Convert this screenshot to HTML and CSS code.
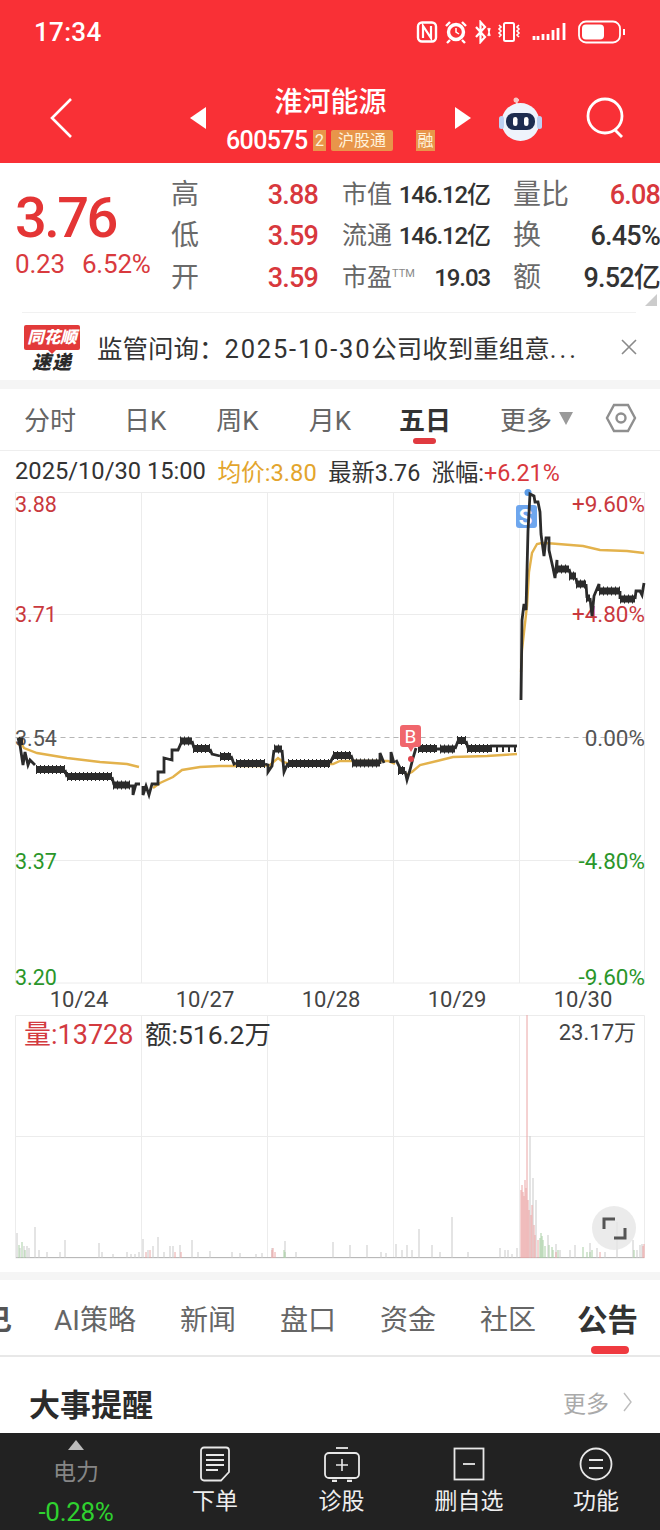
FILE: index.html
```html
<!DOCTYPE html>
<html lang="zh-CN">
<head>
<meta charset="utf-8">
<title>淮河能源</title>
<link rel="stylesheet" href="styles.css">
</head>
<body>
<div class="page">
  <header class="head">
    <div class="status">
      <span class="clock">17:34</span>
      <svg class="status-icons" width="210" height="24" viewBox="0 0 210 24" fill="none" stroke="#fff" stroke-width="2">
        <rect x="2" y="2.500" width="18" height="19" rx="4" stroke-width="2.400"/>
        <path d="M7 18V6l8 12V6" stroke-width="2.200"/>
        <circle cx="40" cy="12" r="7.500" stroke-width="3.400"/>
        <path d="M40 8v4l3 2" stroke-width="1.500"/>
        <path d="M30 6l4-4M50 6l-4-4M34 20l-3 3M46 20l3 3" stroke-width="2.400"/>
        <path d="M60 7l9 10-4.500 5V2L69 7l-9 10" stroke-width="2.200"/>
        <path d="M72 8l2 8M72 16l2-8" stroke-width="1.400"/>
        <rect x="88" y="3" width="10" height="18" rx="1.500" stroke-width="2"/>
        <path d="M83 5l2 2-2 2 2 2-2 2 2 2-2 2M103 5l-2 2 2 2-2 2 2 2-2 2 2 2" stroke-width="1.600"/>
        <path d="M118 16v4M122 16v4M127 14v6M132 14v6M137 10v10M142 8v12M148 3v17" stroke-width="2.800"/>
        <rect x="163" y="1.500" width="41" height="21" rx="7" stroke-width="1.800"/>
        <rect x="166" y="4.500" width="22" height="15" rx="4" fill="#fff" stroke="none"/>
        <path d="M208 9v6" stroke-width="2"/>
      </svg>
    </div>
    <div class="nav">
      <svg class="back" width="24" height="42" viewBox="0 0 24 42" fill="none" stroke="#fff" stroke-width="2.600"><path d="M22 2L3 21l19 19"/></svg>
      <svg class="tri-left" width="16" height="22" viewBox="0 0 16 22"><path d="M16 0v22L0 11z" fill="#fff"/></svg>
      <div class="stock">
        <div class="stock-name">淮河能源</div>
        <div class="stock-code">
          <span class="code">600575</span>
          <span class="tag tag-num">2</span>
          <span class="tag tag-hgt">沪股通</span>
          <span class="tag tag-rong">融</span>
        </div>
      </div>
      <svg class="tri-right" width="16" height="22" viewBox="0 0 16 22"><path d="M0 0v22l16-11z" fill="#fff"/></svg>
      <svg class="robot" width="46" height="44" viewBox="0 0 46 44">
        <path d="M19 7c-1-3 0-4 2-4" fill="none" stroke="#f7c7c7" stroke-width="2"/>
        <circle cx="18" cy="3" r="2.500" fill="#f7c7c7"/>
        <circle cx="22.500" cy="25" r="19" fill="#eef3fc"/>
        <rect x="1" y="19" width="5" height="13" rx="2.500" fill="#bcd0f2"/>
        <rect x="39" y="19" width="5" height="13" rx="2.500" fill="#bcd0f2"/>
        <rect x="8" y="16" width="29" height="17" rx="8" fill="#1d2c50"/>
        <rect x="15" y="20" width="4.500" height="9" rx="2.200" fill="#fff"/>
        <rect x="26" y="20" width="4.500" height="9" rx="2.200" fill="#fff"/>
      </svg>
      <svg class="search" width="40" height="42" viewBox="0 0 40 42" fill="none" stroke="#fff" stroke-width="2.800"><circle cx="19" cy="19" r="17"/><path d="M29 33l7 7"/></svg>
    </div>
  </header>

  <section class="quote">
    <div class="price">
      <div class="price-main">3.76</div>
      <div class="price-sub"><span>0.23</span><span>6.52%</span></div>
    </div>
    <div class="q-grid">
      <span class="q-label">高</span><span class="q-val red">3.88</span>
      <span class="q-name">市值</span><span class="q-num">146.12亿</span>
      <span class="q-label q-label-r">量比</span><span class="q-val red">6.08</span>

      <span class="q-label">低</span><span class="q-val red">3.59</span>
      <span class="q-name">流通</span><span class="q-num">146.12亿</span>
      <span class="q-label q-label-r">换</span><span class="q-val">6.45%</span>

      <span class="q-label">开</span><span class="q-val red">3.59</span>
      <span class="q-name">市盈<sup class="ttm">TTM</sup></span><span class="q-num">19.03</span>
      <span class="q-label q-label-r">额</span><span class="q-val">9.52亿</span>
    </div>
    <span class="corner"></span>
  </section>

  <section class="news">
    <div class="logo">
      <span class="logo-top">同花顺</span>
      <span class="logo-bottom">速递</span>
    </div>
    <div class="news-text">监管问询：<span class="news-num">2025-10-30</span>公司收到重组意<span class="news-dots">...</span></div>
    <svg class="close" width="16" height="16" viewBox="0 0 16 16" stroke="#8a8a8a" stroke-width="1.600"><path d="M1 1l14 14M15 1L1 15"/></svg>
  </section>
  <div class="gap"></div>

  <nav class="periods">
    <span class="period p1">分时</span>
    <span class="period p2">日K</span>
    <span class="period p3">周K</span>
    <span class="period p4">月K</span>
    <span class="period period-on p5">五日</span>
    <span class="period p6">更多</span>
    <span class="more-tri"></span>
    <svg class="hex" width="32" height="30" viewBox="0 0 32 30" fill="none" stroke="#8f8f8f" stroke-width="2.400"><path d="M9 2h14l7 13-7 13H9L2 15z"/><circle cx="16" cy="15" r="4.500"/></svg>
  </nav>

  <div class="info">
    <span class="dark">2025/10/30 15:00</span>
    <span class="gold">均价:3.80</span>
    <span class="dark info-tight">最新3.76</span>
    <span class="dark info-tight">涨幅:<span class="red">+6.21%</span></span>
  </div>

  <svg class="price-chart" width="660" height="495" viewBox="0 490 660 495">
    <defs>
      <g id="bands">
        <path d="M19 741.500H23"/>
        <path d="M36 769.500H65"/>
        <path d="M67 776.500H112"/>
        <path d="M113 785H130"/>
        <path d="M180 741H192"/>
        <path d="M193 748.500H210"/>
        <path d="M220 756.500H231"/>
        <path d="M236 763.500H265"/>
        <path d="M274 749H282"/>
        <path d="M288 763.500H330"/>
        <path d="M333 755.500H351"/>
        <path d="M352 763H380"/>
        <path d="M398 770.500H405"/>
        <path d="M418 748.500H437"/>
        <path d="M440 749H455"/>
        <path d="M457 740.500H466"/>
        <path d="M467 748.500H490"/>
        <path d="M557 569H569"/>
        <path d="M569 576H576"/>
        <path d="M576 584H586"/>
        <path d="M586 598H590"/>
        <path d="M599 591H620"/>
        <path d="M620 599H635"/>
      </g>
    </defs>
    <g stroke="#ececec" stroke-width="1" fill="none">
      <path d="M15.500 492.500H644.500V983H15.500Z"/>
      <path d="M141.500 492V983M267.500 492V983M393.500 492V983M519.500 492V983"/>
      <path d="M15.500 614.500H644.500M15.500 860.500H644.500"/>
    </g>
    <path d="M15.500 737.500H644.500" stroke="#b5b5b5" stroke-width="1" stroke-dasharray="5 4" fill="none"/>

    <g class="axis">
      <text class="ax-red" x="15" y="504">3.88</text>
      <text class="ax-red" x="15" y="614">3.71</text>
      <text class="ax-gray" x="15" y="738">3.54</text>
      <text class="ax-green" x="15" y="861">3.37</text>
      <text class="ax-green" x="15" y="977">3.20</text>
    </g>
    <g class="axis axis-right">
      <text class="ax-red" x="645" y="504">+9.60%</text>
      <text class="ax-red" x="645" y="614">+4.80%</text>
      <text class="ax-gray" x="645" y="738">0.00%</text>
      <text class="ax-green" x="645" y="861">-4.80%</text>
      <text class="ax-green" x="645" y="977">-9.60%</text>
    </g>

    <g class="gold-line">
      <path d="M18 738L24 748L37 753L67 758L100 762L127 764L139 767"/>
      <path d="M153 788L160 783L173 777L182 770L200 767L220 766L262 766L270 765L278 758L283 762L290 764L333 764L340 761L388 761L395 764"/>
      <path d="M405 775L412 772L420 765L437 761L453 757L487 756L517 754"/>
      <path d="M521 672L522 650L527 606L529 572L532 553L537 544L542 543L552 543.500L583 546L600 550L627 551L644 553"/>
    </g>

    <rect x="516" y="505" width="21" height="23" rx="3" fill="#6ea6ee"/>
    <circle cx="528" cy="492.500" r="3.500" fill="#5b9be6"/>
    <text class="mark mark-s" x="525.500" y="517">S</text>

    <g class="line-thin">
      <path d="M18 738L20 745L23 765L25 752L28 765L30 760L35 765M65 770L67 777M112 777L114 785M130 786H133V795L136 784H140M143 786V795L146 786L149 795L152 784L158 784V772L164 772V758L172 760V750L178 750L182 741M192 741L194 748M210 749L212 754L220 756M231 756L234 764L236 763M265 764L268 765V772L272 766L274 750M282 750L284 772L288 763M330 763L334 755M351 755L354 764M380 764V753L384 763M391 763V752L394 763M396 760L400 768M405 771L407 780L410 770L413 758L416 748M437 749L440 749M455 749L458 741M466 741L468 748"/>
      <path d="M521 700L522 620L524 604L526 610L528 531L530 494L534 496L535 502L538 502L540 512L541 534L544 556L546 538L549 538V550L553 568L555 578L557 560V569M569 569L571 576M576 578L577 584M586 584L587 598M590 598L592 616L594 596L599 584V591M620 591V599M635 599L636 591L640 591L642 595L644 583"/>
    </g>
    <use href="#bands" class="band-solid"/>
    <use href="#bands" class="band-bump"/>
    <path class="line-thin" d="M490 746H517"/>
    <path class="line-comb" d="M490 749H517"/>

    <path d="M403 725h15a3 3 0 0 1 3 3v16a3 3 0 0 1-3 3h-4l-3 5-3-5h-5a3 3 0 0 1-3-3v-16a3 3 0 0 1 3-3z" fill="#f0666c"/>
    <circle cx="411" cy="759" r="3" fill="#e0444c"/>
    <text class="mark" x="410.500" y="736">B</text>
  </svg>

  <div class="dates">
    <span>10/24</span><span>10/27</span><span>10/28</span><span>10/29</span><span>10/30</span>
  </div>

  <svg class="vol-chart" width="660" height="245" viewBox="0 1015 660 245">
    <g stroke="#ececec" stroke-width="1" fill="none">
      <path d="M15.500 1015.500H644.500V1258H15.500Z"/>
      <path d="M141.500 1015V1258M267.500 1015V1258M393.500 1015V1258M519.500 1015V1258"/>
      <path d="M15.500 1136.500H644.500"/>
    </g>
    <path d="M16 1257.500H644" stroke="#b9b9b9" stroke-width="1"/>
    <path class="bar-gray" d="M17 1258V1233M20 1258V1248M24 1258V1246M27 1258V1246M29 1258V1248M35 1258V1227M39 1258V1250M47 1258V1252M65 1258V1240M60 1258V1252M99 1258V1243M102 1258V1252M113 1258V1254M127 1258V1252M131 1258V1254M135 1258V1254M139 1258V1252M143 1258V1239M148 1258V1250M153 1258V1246M158 1258V1237M164 1258V1252M170 1258V1246M173 1258V1246M180 1258V1245M192 1258V1240M198 1258V1252M210 1258V1251M232 1258V1252M240 1258V1253M256 1258V1254M262 1258V1253M272 1258V1248M285 1258V1241M296 1258V1252M333 1258V1242M350 1258V1245M367 1258V1245M381 1258V1252M386 1258V1253M396 1258V1244M402 1258V1250M407 1258V1245M412 1258V1250M419 1258V1229M432 1258V1245M440 1258V1252M452 1258V1217M468 1258V1252M500 1258V1248M505 1258V1250M508 1258V1250M512 1258V1254M517 1258V1248M530 1258V1136M533 1258V1178M536 1258V1200M548 1258V1235M556 1258V1244M560 1258V1250M570 1258V1250M575 1258V1245M590 1258V1243M597 1258V1248M605 1258V1252M617 1258V1222M633 1258V1240M637 1258V1250M640 1258V1245M642 1258V1244"/>
    <path class="bar-green" d="M19 1258V1245M22 1258V1242M25 1258V1250M285 1258V1252M284 1258V1250M540 1258V1238M541 1258V1233M542 1258V1236M543 1258V1240M545 1258V1246M549 1258V1245M553 1258V1250M552 1258V1247M558 1258V1250M583 1258V1247M587 1258V1252M590 1258V1252M592 1258V1250M634 1258V1250"/>
    <path class="bar-red" d="M272 1258V1250M273 1258V1248M275 1258V1252M146 1258V1252M150 1258V1250M175 1258V1252M181 1258V1252M521 1258V1190M522 1258V1185M523 1258V1192M524 1258V1196M525 1258V1180M526 1258V1188M528 1258V1200M529 1258V1210M531 1258V1215M532 1258V1205M534 1258V1225M535 1258V1235M538 1258V1240M556 1258V1252M600 1258V1252M643 1258V1246M644 1258V1244"/>
    <path d="M527 1258V1015" stroke="#eaa4a4" stroke-width="1" fill="none"/>
    <circle cx="614" cy="1228" r="22" fill="#e6e6e6" fill-opacity="0.8"/>
    <path d="M604 1229v-10h11M625 1228v10h-11" fill="none" stroke="#555" stroke-width="3"/>
    <text class="vol-liang" x="24" y="1035">量:13728</text>
    <text class="vol-e" x="145" y="1034">额:516.2万</text>
    <text class="vol-max" x="636" y="1032">23.17万</text>
  </svg>

  <div class="gap gap-two"></div>

  <nav class="tabs">
    <span class="tab tab-cut">己</span>
    <span class="tab">AI策略</span>
    <span class="tab">新闻</span>
    <span class="tab">盘口</span>
    <span class="tab">资金</span>
    <span class="tab">社区</span>
    <span class="tab tab-on">公告</span>
  </nav>

  <section class="events">
    <h2 class="events-title">大事提醒</h2>
    <div class="events-more">
      <span>更多</span>
      <svg width="9" height="20" viewBox="0 0 9 20" fill="none" stroke="#bdbdbd" stroke-width="1.400"><path d="M1 1l7 9-7 9"/></svg>
    </div>
  </section>

  <footer class="bar">
    <div class="bar-sector">
      <span class="up-tri"></span>
      <span class="sector-name">电力</span>
      <span class="sector-val">-0.28%</span>
    </div>
    <div class="bar-item bar-order">
      <svg width="32" height="36" viewBox="0 0 32 36" fill="none" stroke="#e8e8e8" stroke-width="1.800"><path d="M5 1.500h22a3 3 0 0 1 3 3V26l-8 8.500H5a3 3 0 0 1-3-3v-27a3 3 0 0 1 3-3z"/><path d="M7 9h18M7 14h18M7 19h18M7 24h12"/></svg>
      <span>下单</span>
    </div>
    <div class="bar-item bar-diag">
      <svg width="38" height="36" viewBox="0 0 38 36" fill="none" stroke="#e8e8e8" stroke-width="1.800"><path d="M13 2h12"/><rect x="2" y="7" width="34" height="25" rx="4"/><path d="M19 13v12M13 19h12" stroke-width="1.600"/><path d="M9 35h5M24 35h5" stroke-width="2.400"/></svg>
      <span>诊股</span>
    </div>
    <div class="bar-item bar-del">
      <svg width="32" height="36" viewBox="0 0 32 36" fill="none" stroke="#e8e8e8" stroke-width="1.800"><rect x="1.500" y="2.500" width="29" height="31"/><path d="M10 18h12"/></svg>
      <span>删自选</span>
    </div>
    <div class="bar-item bar-func">
      <svg width="34" height="36" viewBox="0 0 34 36" fill="none" stroke="#e8e8e8" stroke-width="1.800"><circle cx="17" cy="18" r="15.500"/><path d="M10 14h14M10 22h14"/></svg>
      <span>功能</span>
    </div>
  </footer>
</div>
</body>
</html>
```

FILE: styles.css
```css
* { box-sizing: border-box; }
html, body { margin: 0; padding: 0; }
body {
  width: 660px;
  height: 1530px;
  overflow: hidden;
  background: #fff;
  font-family: Roboto, "Noto Sans CJK SC", sans-serif;
}
.page { width: 660px; height: 1530px; overflow: hidden; }
svg { display: block; }
.red { color: #d8383d; }
.dark { color: #333; }
.gold { color: #e3a52d; }

/* header */
.head { height: 163px; background: #f93036; color: #fff; }
.status { height: 64px; padding: 20px 34px 0; display: flex; justify-content: space-between; }
.clock { font-size: 26px; line-height: 24px; letter-spacing: .3px; font-weight: 500; }
.nav { height: 99px; display: flex; align-items: flex-start; padding-left: 49px; }
.back { margin-top: 33px; }
.tri-left { margin-top: 43px; margin-left: 117px; }
.stock { width: 249px; display: flex; flex-direction: column; align-items: center; }
.stock-name { font-size: 28px; line-height: 34px; margin-top: 22px; font-weight: 500; }
.stock-code { align-self: flex-start; display: flex; align-items: center; height: 28px; margin-top: 6px; margin-left: 20px; }
.code { font-size: 25px; width: 87px; letter-spacing: -.6px; font-weight: 500; }
.tag { background: #e8954a; color: #fff3dc; font-size: 16px; height: 21px; line-height: 21px; text-align: center; display: block; }
.tag-num { width: 13px; }
.tag-hgt { width: 62px; margin-left: 5px; border-radius: 2px; }
.tag-rong { width: 19px; margin-left: 23px; overflow: hidden; }
.tri-right { margin-top: 43px; }
.robot { margin-top: 33px; margin-left: 27px; }
.search { margin-top: 33px; margin-left: 42px; }

/* quote */
.quote { height: 150px; position: relative; display: flex; }
.quote::after { content: ""; position: absolute; left: 22px; right: 24px; bottom: 0; height: 1px; background: #f1f1f1; }
.price { width: 171px; padding-left: 15px; padding-top: 22px; color: #e43535; }
.price-main { font-size: 56px; line-height: 66px; font-weight: 500; letter-spacing: -2.600px; }
.price-sub { display: flex; gap: 17px; font-size: 26px; line-height: 30px; color: #d93a3e; margin-top: -2px; letter-spacing: -.2px; white-space: nowrap; }
.q-grid { flex: 1; display: grid; grid-template-columns: 40px 107px 80px 92px 81px 89px; grid-auto-rows: 41.500px; padding-top: 11px; align-items: center; }
.q-label { color: #6a6a6a; font-size: 28px; white-space: nowrap; line-height: 40px; }
.q-label-r { margin-left: 23px; }
.q-name { color: #666; font-size: 25px; white-space: nowrap; margin-left: 24px; line-height: 40px; }
.q-val { text-align: right; font-size: 27px; color: #333; letter-spacing: -.8px; white-space: nowrap; line-height: 40px; font-weight: 500; }
.q-val.red { color: #d8383d; }
.q-num { text-align: right; font-size: 24px; color: #333; letter-spacing: -1.100px; white-space: nowrap; line-height: 40px; font-weight: 500; }
.ttm { font-size: 11px; vertical-align: 9px; line-height: 0; color: #888; }
.corner { position: absolute; right: 3px; bottom: 7px; width: 0; height: 0; border-left: 12px solid transparent; border-bottom: 12px solid #ccc; }

/* news */
.news { height: 67px; display: flex; align-items: center; padding-left: 24px; }
.logo { width: 56px; height: 50px; margin-top: 6px; display: flex; flex-direction: column; align-items: center; position: relative; }
.logo-top { width: 56px; height: 25px; background: #e23a3a; color: #fff; font-size: 16.500px; font-style: italic; font-weight: 900; line-height: 25px; text-align: center; border-radius: 2px; }
.logo::after { content: ""; position: absolute; left: 24px; top: 25px; width: 0; height: 0; border-left: 4px solid transparent; border-right: 4px solid transparent; border-top: 4px solid #e23a3a; }
.logo-bottom { font-size: 19px; font-weight: 900; font-style: italic; line-height: 25px; color: #2a2a2a; letter-spacing: 1px; }
.news-text { margin-left: 17px; width: 524px; font-size: 25.500px; color: #333; white-space: nowrap; }
.news-num { letter-spacing: 1.800px; }
.news-dots { letter-spacing: 3px; }
.gap { height: 9px; background: #f5f5f5; }

/* period tabs */
.periods { height: 62px; position: relative; border-bottom: 1px solid #eeeeee; display: flex; align-items: center; padding-bottom: 3px; }
.period { font-size: 26px; color: #666; white-space: nowrap; }
.p1 { margin-left: 24px; }
.p2 { margin-left: 48px; }
.p3 { margin-left: 50px; }
.p4 { margin-left: 50px; }
.p5 { margin-left: 48px; }
.p6 { margin-left: 49px; }
.period-on { font-weight: 700; color: #333; position: relative; }
.period-on::after { content: ""; position: absolute; left: 14px; bottom: -7px; width: 23px; height: 6px; border-radius: 3px; background: #e03a40; }
.more-tri { margin-left: 7px; width: 0; height: 0; border-left: 7px solid transparent; border-right: 7px solid transparent; border-top: 13px solid #9a9a9a; }
.hex { margin-left: 32px; }

/* info line */
.info { height: 39px; display: flex; align-items: center; gap: 11.500px; padding-left: 15px; font-size: 23.700px; white-space: nowrap; }
.info-tight { font-size: 23.300px; }

/* chart */
.price-chart { overflow: visible; }
.gold-line path { fill: none; stroke: #e3b24c; stroke-width: 2.400; }
.line-thin, .line-thin path { fill: none; stroke: #2b2b2b; stroke-width: 2.800; }
.band-solid { fill: none; stroke: #2b2b2b; stroke-width: 7; }
.band-bump { fill: none; stroke: #2b2b2b; stroke-width: 9; stroke-dasharray: 1 3; }
.line-comb { fill: none; stroke: #2b2b2b; stroke-width: 6; stroke-dasharray: 2 4; }
.mark { font-size: 19px; fill: #fff; text-anchor: middle; dominant-baseline: central; }
.mark-s { font-size: 22px; font-weight: 700; }
.axis text { font-size: 21.500px; dominant-baseline: central; }
.axis-right text { font-size: 22.500px; text-anchor: end; }
.ax-red { fill: #c9393e; }
.ax-gray { fill: #555; }
.ax-green { fill: #2a962a; }
.dates { height: 30px; display: grid; grid-template-columns: repeat(5, 126px); padding-left: 16px; font-size: 22px; color: #444; line-height: 30px; text-align: center; }
.bar-gray { fill: none; stroke: #c9c9c9; stroke-width: 1; }
.bar-green { fill: none; stroke: #a9cfa5; stroke-width: 1; }
.bar-red { fill: none; stroke: #eba6a6; stroke-width: 1; }
.vol-liang { font-size: 27px; fill: #d33a3f; dominant-baseline: central; }
.vol-e { font-size: 26.500px; fill: #333; dominant-baseline: central; }
.vol-max { font-size: 22px; fill: #444; text-anchor: end; dominant-baseline: central; }
.gap-two { margin-top: 12px; height: 8px; }

/* bottom tabs */
.tabs { height: 77px; border-bottom: 2px solid #e8e8e8; display: flex; align-items: center; overflow: hidden; }
.tab { font-size: 28px; color: #666; white-space: nowrap; margin-left: 44px; }
.tab:nth-child(2) { margin-left: 42px; }
.tab-cut { margin-left: -16px; font-weight: 700; color: #555; }
.tab-on { font-weight: 700; color: #333; position: relative; margin-left: 41px; font-size: 30.500px; }
.tab-on::after { content: ""; position: absolute; left: 14px; bottom: -14px; width: 38px; height: 8px; border-radius: 4px; background: #ef3a40; }
.events { height: 76px; display: flex; align-items: center; justify-content: space-between; padding: 14px 28px 0 29px; }
.events-title { margin: 0; font-size: 31px; font-weight: 700; color: #2b2b2b; }
.events-more { display: flex; align-items: center; gap: 14px; color: #aaa; font-size: 23px; }

/* bottom bar */
.bar { height: 97px; background: #222; display: flex; color: #eee; }
.bar-sector { width: 152px; display: flex; flex-direction: column; align-items: center; }
.up-tri { margin-top: 7px; width: 0; height: 0; border-left: 8px solid transparent; border-right: 8px solid transparent; border-bottom: 10px solid #bbb; }
.sector-name { font-size: 23px; line-height: 30px; color: #868686; margin-top: 8px; }
.sector-val { font-size: 26px; line-height: 30px; color: #2fd12f; margin-top: 9px; letter-spacing: -.3px; }
.bar-item { display: flex; flex-direction: column; align-items: center; font-size: 23px; line-height: 30px; padding-top: 13px; gap: 5px; }
.bar-order { width: 126px; }
.bar-diag { width: 127px; }
.bar-del { width: 128px; }
.bar-func { width: 126px; }
```
